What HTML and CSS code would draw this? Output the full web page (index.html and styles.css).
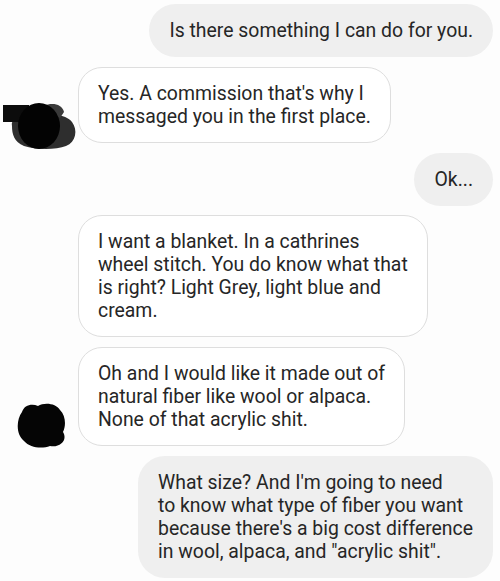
FILE: index.html
```html
<!DOCTYPE html>
<html>
<head>
<meta charset="utf-8">
<link rel="stylesheet" href="styles.css">
</head>
<body>
<div class="chat">
  <div class="row out">
    <div class="bubble sent">Is there something I can do for you.</div>
  </div>
  <div class="row in">
    <div class="avatar">
      <svg class="av1" width="78" height="50" viewBox="0 0 78 50">
        <path d="M12 26 C 10 18, 22 14, 34 16 C 46 12, 66 14, 72 22 C 78 30, 76 42, 66 46 C 56 50, 36 50, 24 46 C 14 42, 12 34, 12 26 Z" fill="#2e2e2e"/>
        <path d="M44 6 C 52 2, 62 4, 64 12 L 60 18 L 46 14 Z" fill="#3a3a3a"/>
        <rect x="3" y="5" width="26" height="17" fill="#0c0c0c"/>
        <ellipse cx="39" cy="26" rx="21" ry="23" fill="#030303"/>
      </svg>
    </div>
    <div class="bubble recv">Yes. A commission that's why I<br>messaged you in the first place.</div>
  </div>
  <div class="row out">
    <div class="bubble sent">Ok...</div>
  </div>
  <div class="row in">
    <div class="avatar"></div>
    <div class="bubble recv">I want a blanket. In a cathrines<br>wheel stitch. You do know what that<br>is right? Light Grey, light blue and<br>cream.</div>
  </div>
  <div class="row in">
    <div class="avatar">
      <svg class="av2" width="78" height="48" viewBox="0 0 78 48">
        <path d="M22 12 C 24 5, 32 3, 38 6 C 44 2, 56 3, 60 10 C 66 16, 66 26, 63 32 C 68 40, 60 48, 50 46 C 42 49, 30 48, 24 41 C 16 35, 16 20, 22 12 Z" fill="#050505"/>
      </svg>
    </div>
    <div class="bubble recv">Oh and I would like it made out of<br>natural fiber like wool or alpaca.<br>None of that acrylic shit.</div>
  </div>
  <div class="row out">
    <div class="bubble sent">What size? And I'm going to need<br>to know what type of fiber you want<br>because there's a big cost difference<br>in wool, alpaca, and "acrylic shit".</div>
  </div>
</div>
</body>
</html>
```

FILE: styles.css
```css
html, body {
  margin: 0;
  padding: 0;
  background: #fdfdfd;
}
.chat {
  width: 500px;
  height: 581px;
  padding: 4px 7px 0 0;
  box-sizing: border-box;
  display: flex;
  flex-direction: column;
  gap: 9.8px;
  font-family: Roboto, "Liberation Sans", sans-serif;
  font-size: 19.4px;
  line-height: 23px;
  color: #262626;
  overflow: hidden;
}
.row {
  display: flex;
  align-items: flex-end;
}
.row.out {
  justify-content: flex-end;
}
.avatar {
  width: 78px;
  flex: none;
  display: flex;
  align-items: flex-end;
}
.av1 {
  margin-bottom: -7px;
}
.av2 {
  margin-bottom: -2px;
}
.bubble {
  padding: 15px 20px;
  white-space: nowrap;
}
.sent {
  background: #efefef;
  border-radius: 27px;
}
.recv {
  background: #ffffff;
  border: 1px solid #dedede;
  border-radius: 24px;
  padding: 14px 19px;
}
```
